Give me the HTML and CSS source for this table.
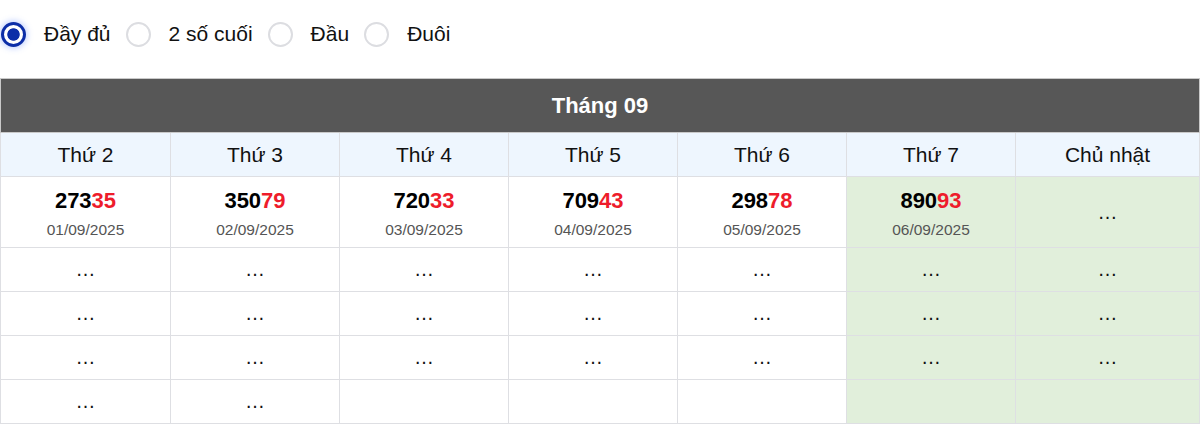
FILE: index.html
```html
<!DOCTYPE html>
<html lang="vi">
<head>
<meta charset="utf-8">
<title>Tháng 09</title>
<link rel="stylesheet" href="styles.css">
</head>
<body>
<div class="modes">
  <label class="mode"><span class="radio checked"></span><span class="mode-label">Đầy đủ</span></label>
  <label class="mode"><span class="radio"></span><span class="mode-label">2 số cuối</span></label>
  <label class="mode"><span class="radio"></span><span class="mode-label">Đầu</span></label>
  <label class="mode"><span class="radio"></span><span class="mode-label">Đuôi</span></label>
</div>
<table class="cal">
  <colgroup>
    <col class="c1"><col class="c"><col class="c"><col class="c"><col class="c"><col class="c"><col>
  </colgroup>
  <thead>
    <tr><th class="month" colspan="7">Tháng 09</th></tr>
    <tr class="days">
      <th>Thứ 2</th><th>Thứ 3</th><th>Thứ 4</th><th>Thứ 5</th><th>Thứ 6</th><th class="wk">Thứ 7</th><th class="wk">Chủ nhật</th>
    </tr>
  </thead>
  <tbody>
    <tr class="first">
      <td><div class="num">273<span class="tail">35</span></div><div class="date">01/09/2025</div></td>
      <td><div class="num">350<span class="tail">79</span></div><div class="date">02/09/2025</div></td>
      <td><div class="num">720<span class="tail">33</span></div><div class="date">03/09/2025</div></td>
      <td><div class="num">709<span class="tail">43</span></div><div class="date">04/09/2025</div></td>
      <td><div class="num">298<span class="tail">78</span></div><div class="date">05/09/2025</div></td>
      <td class="we"><div class="num">890<span class="tail">93</span></div><div class="date">06/09/2025</div></td>
      <td class="we dots">…</td>
    </tr>
    <tr>
      <td class="dots">…</td><td class="dots">…</td><td class="dots">…</td><td class="dots">…</td><td class="dots">…</td><td class="we dots">…</td><td class="we dots">…</td>
    </tr>
    <tr>
      <td class="dots">…</td><td class="dots">…</td><td class="dots">…</td><td class="dots">…</td><td class="dots">…</td><td class="we dots">…</td><td class="we dots">…</td>
    </tr>
    <tr>
      <td class="dots">…</td><td class="dots">…</td><td class="dots">…</td><td class="dots">…</td><td class="dots">…</td><td class="we dots">…</td><td class="we dots">…</td>
    </tr>
    <tr>
      <td class="dots">…</td><td class="dots">…</td><td></td><td></td><td></td><td class="we"></td><td class="we"></td>
    </tr>
  </tbody>
</table>
</body>
</html>
```

FILE: styles.css
```css
html, body {
  margin: 0;
  padding: 0;
  background: #ffffff;
}
body {
  font-family: "Liberation Sans", Arial, sans-serif;
  color: #111;
}
.modes {
  display: flex;
  align-items: center;
  height: 78px;
  padding-left: 1px;
  box-sizing: border-box;
  padding-bottom: 10px;
}
.mode {
  display: flex;
  align-items: center;
  margin-right: 15px;
}
.radio {
  width: 25px;
  height: 25px;
  box-sizing: border-box;
  border-radius: 50%;
  border: 2px solid #dcdde1;
  background: #fff;
  margin-right: 18px;
}
.radio.checked {
  border: 3px solid #0c2ea8;
  background: radial-gradient(circle, #0c2ea8 0 5.8px, #ffffff 6.6px);
  box-shadow: 0 0 6px 1px rgba(60, 110, 255, 0.35);
}
.mode-label {
  font-size: 21px;
  color: #111;
}
.cal {
  width: 1200px;
  border-collapse: collapse;
  table-layout: fixed;
}
.cal col.c1 { width: 170px; }
.cal col.c { width: 169px; }
.cal th, .cal td {
  border: 1px solid #dedfe3;
  text-align: center;
  vertical-align: middle;
  padding: 0;
}
.month {
  background: #575757;
  color: #ffffff;
  font-size: 22px;
  font-weight: bold;
  height: 53px;
  border-color: #c9c9c9 !important;
}
.days th {
  background: #eef6fe;
  font-weight: normal;
  font-size: 21px;
  color: #111;
  height: 43px;
}
tbody td {
  height: 43px;
  background: #fff;
}
tbody tr.first td {
  height: 70px;
}
td.we {
  background: #e1efdb;
}
.num {
  font-size: 22px;
  font-weight: bold;
  color: #000;
  line-height: 26px;
  margin-top: 3px;
}
.tail {
  color: #ee1c2b;
}
.date {
  font-size: 15.5px;
  color: #555;
  margin-top: 7px;
  line-height: 18px;
}
.dots {
  font-size: 20px;
  color: #111;
}
```
